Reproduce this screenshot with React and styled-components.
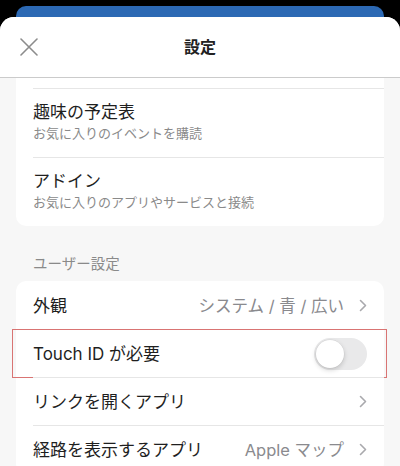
import styled, { createGlobalStyle } from 'styled-components';

const GlobalStyle = createGlobalStyle`
  html, body {
    margin: 0;
    padding: 0;
    background: #000;
  }
  body {
    width: 400px;
    height: 466px;
    overflow: hidden;
    font-family: "Inter", "Noto Sans CJK JP", sans-serif;
    color: #1f1f1f;
    -webkit-font-smoothing: antialiased;
  }
`;

const Page = styled.div`
  height: 466px;
  display: flex;
  flex-direction: column;
  padding-top: 6px;
  box-sizing: border-box;
`;

const BackCard = styled.div`
  height: 11px;
  margin: 0 16px;
  background: #2c69b4;
  border-radius: 10px 10px 0 0;
`;

const Sheet = styled.div`
  flex: 1;
  background: #f7f7f7;
  border-radius: 14px 14px 0 0;
  overflow: hidden;
  display: flex;
  flex-direction: column;
`;

const Header = styled.header`
  height: 60px;
  flex-shrink: 0;
  background: #fff;
  border-bottom: 1px solid #cbcbcb;
  display: grid;
  grid-template-columns: 1fr auto 1fr;
  align-items: center;
`;

const CloseButton = styled.button`
  justify-self: start;
  margin-left: 19px;
  padding: 0;
  border: none;
  background: none;
  width: 19px;
  height: 19px;
  display: flex;
  align-items: center;
  justify-content: center;
`;

const Title = styled.h1`
  margin: 0;
  font-size: 16px;
  line-height: 22px;
  font-weight: 700;
  color: #222;
`;

const Content = styled.div`
  padding: 0 16px;
`;

const Card = styled.section`
  background: #fff;
  border-radius: ${p => (p.$clipped ? '0 0 10px 10px' : '10px')};
  padding-top: ${p => (p.$clipped ? '10px' : '0')};
  ${p => !p.$clipped && `& > *:first-child { border-top-color: transparent; }`}
`;

const Row = styled.div`
  position: relative;
  margin-left: 17px;
  padding-right: 17px;
  border-top: 1px solid #e6e6e6;
  min-height: ${p => (p.$tall ? '68px' : '47px')};
  display: flex;
  align-items: center;
  justify-content: space-between;
  box-sizing: content-box;

  ${p =>
    p.$highlight &&
    `
    &::after {
      content: '';
      position: absolute;
      top: -1px;
      bottom: -1px;
      left: -21px;
      right: -3px;
      border: 1px solid #d97473;
      pointer-events: none;
    }
  `}
`;

const TextBlock = styled.div`
  display: flex;
  flex-direction: column;
  padding: 12px 0 15px;
`;

const Label = styled.span`
  font-size: 17px;
  line-height: 22px;
  color: #1f1f1f;
`;

const SubLabel = styled.span`
  margin-top: 1px;
  font-size: 13px;
  line-height: 18px;
  color: #8a8a8a;
`;

const SectionLabel = styled.div`
  margin: 28px 0 7px 17px;
  font-size: 14.5px;
  line-height: 20px;
  color: #8a8a8a;
`;

const Trailing = styled.div`
  display: flex;
  align-items: center;
  gap: 15px;
`;

const Value = styled.span`
  font-size: 16.5px;
  line-height: 22px;
  color: #8a8a8e;
`;

const Switch = styled.div`
  position: relative;
  width: 53px;
  height: 32px;
  border-radius: 16px;
  background: #e9e9ea;

  &::before {
    content: '';
    position: absolute;
    top: 2px;
    left: 2px;
    width: 28px;
    height: 28px;
    border-radius: 50%;
    background: #fff;
    box-shadow: 0 2px 5px rgba(0, 0, 0, 0.18), 0 0 0 0.5px rgba(0, 0, 0, 0.06);
  }
`;

const Chevron = () => (
  <svg width="8" height="13" viewBox="0 0 8 13" fill="none">
    <path d="M1.5 1.5L6.5 6.5L1.5 11.5" stroke="#a9a9ad" strokeWidth="1.6" strokeLinecap="round" strokeLinejoin="round" />
  </svg>
);

const CloseIcon = () => (
  <svg width="18" height="18" viewBox="0 0 18 18" fill="none">
    <path d="M1 1L17 17M17 1L1 17" stroke="#8c8c8c" strokeWidth="1.6" strokeLinecap="round" />
  </svg>
);

function LinkRow({ label, value, highlight }) {
  return (
    <Row $highlight={highlight}>
      <Label>{label}</Label>
      <Trailing>
        {value && <Value>{value}</Value>}
        <Chevron />
      </Trailing>
    </Row>
  );
}

export default function App() {
  return (
    <>
      <GlobalStyle />
      <Page>
        <BackCard />
        <Sheet>
          <Header>
            <CloseButton aria-label="閉じる">
              <CloseIcon />
            </CloseButton>
            <Title>設定</Title>
          </Header>
          <Content>
            <Card $clipped>
              <Row $tall>
                <TextBlock>
                  <Label>趣味の予定表</Label>
                  <SubLabel>お気に入りのイベントを購読</SubLabel>
                </TextBlock>
              </Row>
              <Row $tall>
                <TextBlock>
                  <Label>アドイン</Label>
                  <SubLabel>お気に入りのアプリやサービスと接続</SubLabel>
                </TextBlock>
              </Row>
            </Card>

            <SectionLabel>ユーザー設定</SectionLabel>

            <Card>
              <LinkRow label="外観" value="システム / 青 / 広い" />
              <Row $highlight>
                <Label>Touch ID が必要</Label>
                <Switch />
              </Row>
              <LinkRow label="リンクを開くアプリ" />
              <LinkRow label="経路を表示するアプリ" value="Apple マップ" />
            </Card>
          </Content>
        </Sheet>
      </Page>
    </>
  );
}
